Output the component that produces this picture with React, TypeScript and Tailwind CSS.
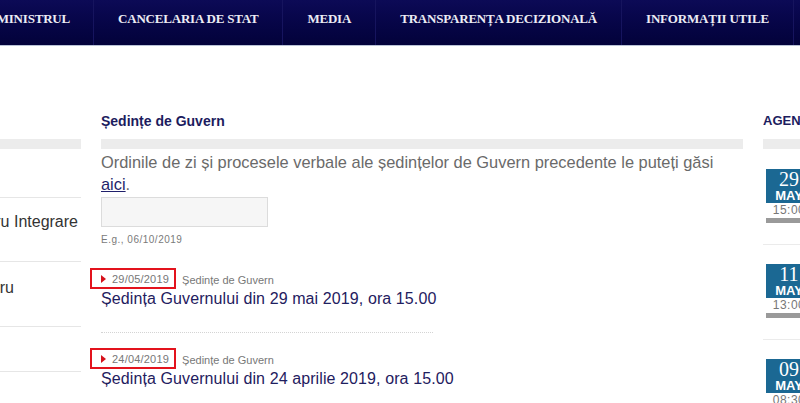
import React from 'react';

const navItems = ['CANCELARIA DE STAT', 'MEDIA', 'TRANSPARENȚA DECIZIONALĂ', 'INFORMAȚII UTILE'];

const sessions = [
  { date: '29/05/2019', title: 'Ședința Guvernului din 29 mai 2019, ora 15.00' },
  { date: '24/04/2019', title: 'Ședința Guvernului din 24 aprilie 2019, ora 15.00' },
];

const agenda = [
  { day: '29', month: 'MAY', time: '15:00' },
  { day: '11', month: 'MAY', time: '13:00' },
  { day: '09', month: 'MAY', time: '08:30' },
];

const sans = "font-['Liberation_Sans',Arial,sans-serif]";

const App = () => {
  return (
    <div className={`w-[800px] h-[403px] overflow-hidden bg-white ${sans}`}>
      {/* top navigation */}
      <nav className="h-[46px] flex bg-gradient-to-b from-[#0c0a56] to-[#03023a] border-b border-[#b9c2d6] font-['Liberation_Serif',Georgia,serif] font-bold text-[13px] tracking-[-0.2px] text-[#ececf4] whitespace-nowrap">
        <div className="w-[93px] shrink-0 flex justify-end overflow-hidden pr-[23px] pt-[9px]">
          PRIM-MINISTRUL
        </div>
        {navItems.map((item) => (
          <div key={item} className="flex border-l border-[#16145e] px-6 pt-[9px]">
            {item}
          </div>
        ))}
        <div className="flex-1 border-l border-[#16145e]" />
      </nav>

      <div className="flex">
        {/* left sidebar (cut off) */}
        <aside className="w-[81px] shrink-0 pt-[93px] overflow-hidden">
          <div className="h-[10px] bg-[#ececec]" />
          <div className="h-[48px]" />
          <div className="h-[64px] border-t border-[#e6e6e6] flex justify-end pr-[3px] pt-[12px] text-[16px] text-[#333] whitespace-nowrap">
            pentru Integrare
          </div>
          <div className="h-[65px] border-t border-[#e6e6e6] flex justify-end pr-[67px] pt-[14px] text-[16px] text-[#333] whitespace-nowrap">
            pentru
          </div>
          <div className="h-[46px] border-t border-b border-[#e6e6e6]" />
        </aside>

        {/* main content */}
        <main className="ml-[20px] w-[642px] shrink-0 pt-[66px]">
          <h2 className="text-[14px] leading-[18px] font-bold text-[#1c1c5e]">Ședințe de Guvern</h2>
          <div className="mt-[9px] h-[10px] bg-[#ececec]" />
          <p className="mt-[2px] text-[16.4px] leading-[22px] text-[#6a6a6a]">
            Ordinile de zi și procesele verbale ale ședințelor de Guvern precedente le puteți găsi
            <br />
            <a className="text-[#1f1f6b] underline">aici</a>.
          </p>
          <div className="mt-[2px] w-[167px] h-[30px] border border-[#dcdcdc] bg-[#f6f6f6]" />
          <div className="mt-[6px] text-[10px] leading-[14px] text-[#7a7a7a] tracking-[0.5px]">E.g., 06/10/2019</div>

          {sessions.map((s, i) => (
            <div key={s.date}>
              {i > 0 && <div className="mt-[23px] w-[332px] border-t border-dotted border-[#d4d4d4]" />}
              <div className={`${i === 0 ? 'mt-[21px]' : 'mt-[15px]'} flex items-end`}>
                <span className="-ml-[11px] h-[21px] flex items-end pl-[9px] pr-[5px] pb-[1px] border-2 border-[#e3131d]">
                  <span className="mb-[3px] mr-[6px] w-0 h-0 border-y-[4px] border-y-transparent border-l-[5px] border-l-[#d6111b]" />
                  <span className="text-[11px] leading-[14px] text-[#777] tracking-[0.2px]">{s.date}</span>
                </span>
                <span className="ml-[6px] mb-[2px] text-[11px] leading-[14px] text-[#777]">Ședințe de Guvern</span>
              </div>
              <h3 className="text-[16px] leading-[20px] tracking-[0.1px] text-[#1f2060]">{s.title}</h3>
            </div>
          ))}
        </main>

        {/* agenda column (cut off) */}
        <section className="ml-[20px] flex-1 pt-[66px] overflow-hidden">
          <h2 className="text-[13px] leading-[18px] font-bold text-[#1c1c5e] whitespace-nowrap">AGENDA</h2>
          <div className="mt-[9px] h-[10px] w-[60px] bg-[#ececec]" />
          {agenda.map((a, i) => (
            <div key={i} className={i === 0 ? 'mt-[20px]' : ''}>
              {i > 0 && <div className="mt-[21px] mb-[19px] w-[60px] border-t border-[#ebebeb]" />}
              <div className="ml-[3px] w-[46px]">
                <div className="h-[34px] bg-[#1b6893] flex flex-col items-center text-white">
                  <span className="font-['Liberation_Serif',Georgia,serif] text-[20px] leading-[20px]">{a.day}</span>
                  <span className="text-[13px] leading-[14px] font-bold">{a.month}</span>
                </div>
                <div className="text-center text-[12px] leading-[14px] text-[#777] tracking-[0.5px]">{a.time}</div>
                <div className="mt-[1px] h-[5px] bg-[#9a9a9a]" />
              </div>
            </div>
          ))}
        </section>
      </div>
    </div>
  );
};

export default App;
